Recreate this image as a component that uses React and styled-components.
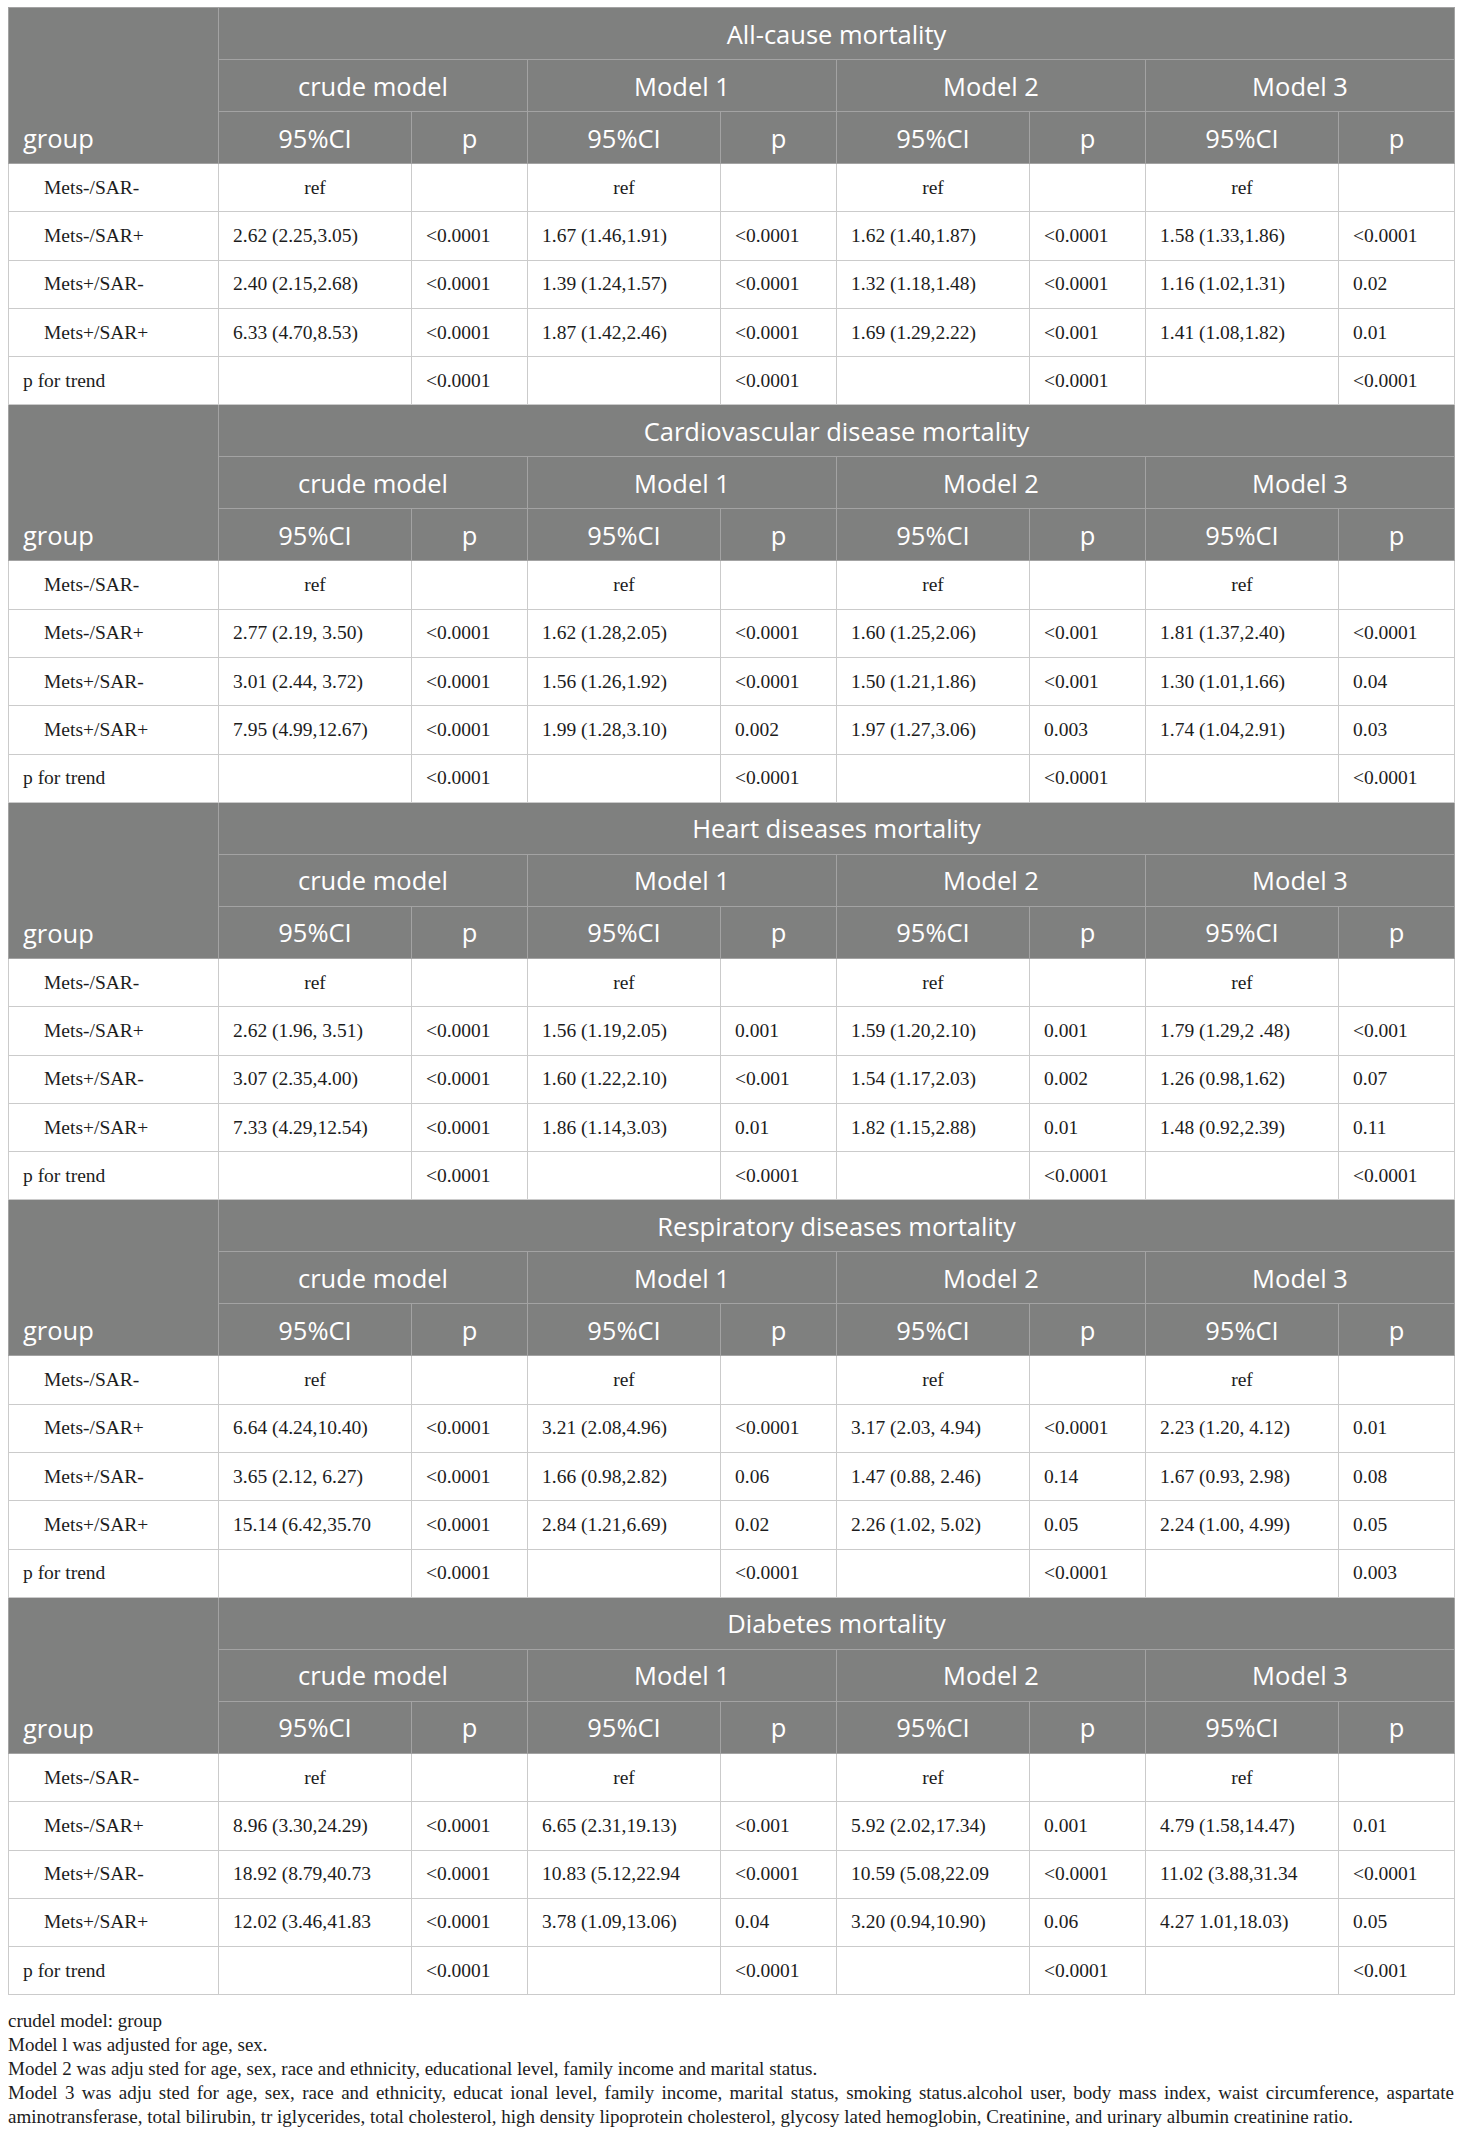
import React from 'react';
import styled, { createGlobalStyle } from 'styled-components';

const GlobalStyle = createGlobalStyle`
  body {
    margin: 0;
    background: #fff;
  }
`;

const models = ['crude model', 'Model 1', 'Model 2', 'Model 3'];
const widths = [210, 193, 116, 193, 116, 193, 116, 193, 116];

const sections = [
  {
    title: 'All-cause mortality',
    rows: [
      ['Mets-/SAR+', '2.62 (2.25,3.05)', '<0.0001', '1.67 (1.46,1.91)', '<0.0001', '1.62 (1.40,1.87)', '<0.0001', '1.58 (1.33,1.86)', '<0.0001'],
      ['Mets+/SAR-', '2.40 (2.15,2.68)', '<0.0001', '1.39 (1.24,1.57)', '<0.0001', '1.32 (1.18,1.48)', '<0.0001', '1.16 (1.02,1.31)', '0.02'],
      ['Mets+/SAR+', '6.33 (4.70,8.53)', '<0.0001', '1.87 (1.42,2.46)', '<0.0001', '1.69 (1.29,2.22)', '<0.001', '1.41 (1.08,1.82)', '0.01'],
    ],
    trend: ['<0.0001', '<0.0001', '<0.0001', '<0.0001'],
  },
  {
    title: 'Cardiovascular disease mortality',
    rows: [
      ['Mets-/SAR+', '2.77 (2.19, 3.50)', '<0.0001', '1.62 (1.28,2.05)', '<0.0001', '1.60 (1.25,2.06)', '<0.001', '1.81 (1.37,2.40)', '<0.0001'],
      ['Mets+/SAR-', '3.01 (2.44, 3.72)', '<0.0001', '1.56 (1.26,1.92)', '<0.0001', '1.50 (1.21,1.86)', '<0.001', '1.30 (1.01,1.66)', '0.04'],
      ['Mets+/SAR+', '7.95 (4.99,12.67)', '<0.0001', '1.99 (1.28,3.10)', '0.002', '1.97 (1.27,3.06)', '0.003', '1.74 (1.04,2.91)', '0.03'],
    ],
    trend: ['<0.0001', '<0.0001', '<0.0001', '<0.0001'],
  },
  {
    title: 'Heart diseases mortality',
    rows: [
      ['Mets-/SAR+', '2.62 (1.96, 3.51)', '<0.0001', '1.56 (1.19,2.05)', '0.001', '1.59 (1.20,2.10)', '0.001', '1.79 (1.29,2 .48)', '<0.001'],
      ['Mets+/SAR-', '3.07 (2.35,4.00)', '<0.0001', '1.60 (1.22,2.10)', '<0.001', '1.54 (1.17,2.03)', '0.002', '1.26 (0.98,1.62)', '0.07'],
      ['Mets+/SAR+', '7.33 (4.29,12.54)', '<0.0001', '1.86 (1.14,3.03)', '0.01', '1.82 (1.15,2.88)', '0.01', '1.48 (0.92,2.39)', '0.11'],
    ],
    trend: ['<0.0001', '<0.0001', '<0.0001', '<0.0001'],
  },
  {
    title: 'Respiratory diseases mortality',
    rows: [
      ['Mets-/SAR+', '6.64 (4.24,10.40)', '<0.0001', '3.21 (2.08,4.96)', '<0.0001', '3.17 (2.03, 4.94)', '<0.0001', '2.23 (1.20, 4.12)', '0.01'],
      ['Mets+/SAR-', '3.65 (2.12, 6.27)', '<0.0001', '1.66 (0.98,2.82)', '0.06', '1.47 (0.88, 2.46)', '0.14', '1.67 (0.93, 2.98)', '0.08'],
      ['Mets+/SAR+', '15.14 (6.42,35.70', '<0.0001', '2.84 (1.21,6.69)', '0.02', '2.26 (1.02, 5.02)', '0.05', '2.24 (1.00, 4.99)', '0.05'],
    ],
    trend: ['<0.0001', '<0.0001', '<0.0001', '0.003'],
  },
  {
    title: 'Diabetes mortality',
    rows: [
      ['Mets-/SAR+', '8.96 (3.30,24.29)', '<0.0001', '6.65 (2.31,19.13)', '<0.001', '5.92 (2.02,17.34)', '0.001', '4.79 (1.58,14.47)', '0.01'],
      ['Mets+/SAR-', '18.92 (8.79,40.73', '<0.0001', '10.83 (5.12,22.94', '<0.0001', '10.59 (5.08,22.09', '<0.0001', '11.02 (3.88,31.34', '<0.0001'],
      ['Mets+/SAR+', '12.02 (3.46,41.83', '<0.0001', '3.78 (1.09,13.06)', '0.04', '3.20 (0.94,10.90)', '0.06', '4.27 1.01,18.03)', '0.05'],
    ],
    trend: ['<0.0001', '<0.0001', '<0.0001', '<0.001'],
  },
];

const notes = [
  'crudel model: group',
  'Model l was adjusted for age, sex.',
  'Model 2 was adju sted for age, sex, race and ethnicity, educational level, family income and marital status.',
  'Model 3 was adju sted for age, sex, race and ethnicity, educat ional level, family income, marital status, smoking status.alcohol user, body mass index, waist circumference, aspartate aminotransferase, total bilirubin, tr iglycerides, total cholesterol, high density lipoprotein cholesterol, glycosy lated hemoglobin, Creatinine, and urinary albumin creatinine ratio.',
];

const App = () => {
  return (
    <Page>
      <GlobalStyle />
      <Table>
        <colgroup>
          {widths.map((w, i) => <col key={i} style={{ width: w }} />)}
        </colgroup>
        {sections.map((s) => (
          <tbody key={s.title}>
            <tr>
              <Head rowSpan={3} $group>group</Head>
              <Head colSpan={8}>{s.title}</Head>
            </tr>
            <tr>
              {models.map((m) => <Head key={m} colSpan={2}>{m}</Head>)}
            </tr>
            <tr>
              {models.map((m) => (
                <React.Fragment key={m}>
                  <Head>95%CI</Head>
                  <Head>p</Head>
                </React.Fragment>
              ))}
            </tr>
            <tr>
              <Cell $indent>Mets-/SAR-</Cell>
              {models.map((m) => (
                <React.Fragment key={m}>
                  <Cell $center>ref</Cell>
                  <Cell />
                </React.Fragment>
              ))}
            </tr>
            {s.rows.map((r) => (
              <tr key={r[0]}>
                {r.map((v, i) => <Cell key={i} $indent={i === 0}>{v}</Cell>)}
              </tr>
            ))}
            <tr>
              <Cell>p for trend</Cell>
              {s.trend.map((v, i) => (
                <React.Fragment key={i}>
                  <Cell />
                  <Cell>{v}</Cell>
                </React.Fragment>
              ))}
            </tr>
          </tbody>
        ))}
      </Table>
      <Notes>
        {notes.map((n) => <p key={n}>{n}</p>)}
      </Notes>
    </Page>
  );
};

const Page = styled.div`
  padding: 7px 7px 0 8px;
  width: 1446px;
`;

const Table = styled.table`
  width: 1446px;
  table-layout: fixed;
  border-collapse: collapse;
`;

const Head = styled.th`
  height: 51px;
  padding: 0 14px;
  background: #7f807f;
  color: #fff;
  border: 1px solid #a3a3a3;
  font-family: "Open Sans", "Noto Sans", sans-serif;
  font-weight: 400;
  font-size: 25.5px;
  line-height: 50px;
  text-align: ${(p) => (p.$group ? 'left' : 'center')};
  vertical-align: ${(p) => (p.$group ? 'bottom' : 'middle')};
  white-space: nowrap;
`;

const Cell = styled.td`
  height: 47.3px;
  padding: 0 0 0 ${(p) => (p.$indent ? '35px' : '14px')};
  border: 1px solid #cbcbcb;
  color: #1c1c1c;
  font-family: "Liberation Serif", "Times New Roman", serif;
  font-size: 19.5px;
  line-height: 24px;
  text-align: ${(p) => (p.$center ? 'center' : 'left')};
  ${(p) => p.$center && 'padding: 0;'}
  vertical-align: middle;
  white-space: nowrap;
`;

const Notes = styled.div`
  padding-top: 14px;
  font-family: "Liberation Serif", "Times New Roman", serif;
  font-size: 19px;
  line-height: 24px;
  color: #1c1c1c;

  p {
    margin: 0;
    text-align: justify;
  }
`;

export default App;
